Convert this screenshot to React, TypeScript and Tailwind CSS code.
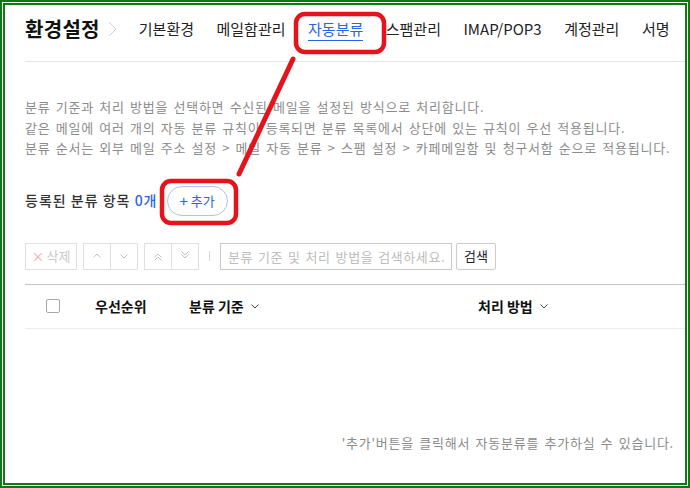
import React from 'react';

const tabs = ['기본환경', '메일함관리', '자동분류', '스팸관리', 'IMAP/POP3', '계정관리', '서명'];

function Chevron({ dir = 'down', double = false }: { dir?: 'up' | 'down'; double?: boolean }) {
  const up = dir === 'up';
  return (
    <svg width="10" height="10" viewBox="0 0 10 10" fill="none" stroke="#c4c4c4" strokeWidth="1">
      {up ? <polyline points="1.5,6.5 5,3 8.5,6.5" /> : <polyline points="1.5,3.5 5,7 8.5,3.5" />}
      {double && (up ? <polyline points="1.5,9.5 5,6 8.5,9.5" /> : <polyline points="1.5,0.5 5,4 8.5,0.5" />)}
    </svg>
  );
}

function SortCaret() {
  return (
    <svg width="10" height="10" viewBox="0 0 10 10" fill="none" stroke="#444" strokeWidth="1" className="ml-[6px]">
      <polyline points="1.5,3.5 5,7 8.5,3.5" />
    </svg>
  );
}

export default function App() {
  return (
    <div
      className="relative w-[690px] h-[488px] overflow-hidden bg-white border-2 border-[#0f7a14] p-px text-[#333]"
      style={{ fontFamily: '"Noto Sans CJK KR", "Noto Sans", sans-serif' }}
    >
      <div className="w-full h-full border-2 border-[#0f7a14] overflow-hidden pl-[20px]">
        {/* Header */}
        <div className="flex items-center h-[57px] pb-[9px] border-b border-[#e6e6e6] whitespace-nowrap">
          <h1 className="text-[20px] font-bold tracking-[0.3px] text-[#111] leading-[24px]">환경설정</h1>
          <svg width="9" height="16" viewBox="0 0 9 16" fill="none" stroke="#d0d0d0" strokeWidth="1" className="ml-[8px]">
            <polyline points="1,1 8,8 1,15" />
          </svg>
          <nav className="flex gap-[22.5px] ml-[22px]">
            {tabs.map(t => (
              <span
                key={t}
                className={`relative text-[15px] leading-[20px] ${t === '자동분류' ? 'text-[#2764e6]' : 'text-[#222]'}`}
              >
                {t}
                {t === '자동분류' && <span className="absolute left-0 right-0 top-[21px] h-px bg-[#2764e6]" />}
              </span>
            ))}
          </nav>
        </div>

        {/* Description */}
        <div className="mt-[35px] text-[13px] tracking-[0.77px] [word-spacing:1.6px] leading-[20.5px] text-[#8c8c8c] whitespace-nowrap">
          <p>분류 기준과 처리 방법을 선택하면 수신된 메일을 설정된 방식으로 처리합니다.</p>
          <p>같은 메일에 여러 개의 자동 분류 규칙이 등록되면 분류 목록에서 상단에 있는 규칙이 우선 적용됩니다.</p>
          <p>분류 순서는 외부 메일 주소 설정 &gt; 메일 자동 분류 &gt; 스팸 설정 &gt; 카페메일함 및 청구서함 순으로 적용됩니다.</p>
        </div>

        {/* Count + add */}
        <div className="mt-[27px] flex items-center h-[30px]">
          <span className="text-[14px] font-medium tracking-[1px] text-[#333]">
            등록된 분류 항목 <span className="text-[#2764e6]">0개</span>
          </span>
          <button className="ml-[9px] h-[30px] w-[61px] rounded-full border border-[#a9c3f2] text-[13px] text-[#2764e6] flex items-center justify-center">
            <span className="mr-[3px] text-[15px] leading-none">+</span>추가
          </button>
        </div>

        {/* Toolbar */}
        <div className="mt-[27px] flex items-center h-[27px] text-[13px]">
          <button className="h-full w-[52px] border border-[#e0e0e0] flex items-center justify-center text-[#c9c9c9]">
            <span className="text-[#f2a5a5] mr-[2px]">×</span>삭제
          </button>
          <div className="ml-[6px] h-full w-[55px] border border-[#e0e0e0] flex">
            <span className="flex-1 flex items-center justify-center border-r border-[#e0e0e0]"><Chevron dir="up" /></span>
            <span className="flex-1 flex items-center justify-center"><Chevron dir="down" /></span>
          </div>
          <div className="ml-[6px] h-full w-[55px] border border-[#e0e0e0] flex">
            <span className="flex-1 flex items-center justify-center border-r border-[#e0e0e0]"><Chevron dir="up" double /></span>
            <span className="flex-1 flex items-center justify-center"><Chevron dir="down" double /></span>
          </div>
          <span className="ml-[10px] w-px h-[10px] bg-[#d6d6d6]" />
          <input
            className="ml-[10px] h-full w-[232px] border border-[#c9c9c9] pl-[7px] pr-[2px] text-[13px] tracking-[0.6px] [word-spacing:1.4px] outline-none placeholder:text-[#bdbdbd]"
            placeholder="분류 기준 및 처리 방법을 검색하세요."
          />
          <button className="ml-[4px] h-full w-[40px] border border-[#cccccc] rounded-[2px] text-[#222]">검색</button>
        </div>

        {/* Table header */}
        <div className="mt-[14px] flex items-center h-[45px] border-t border-[#c4c4c4] border-b border-b-[#ececec] text-[14px] font-semibold text-[#111] whitespace-nowrap">
          <div className="w-[70px] pl-[21px] flex items-center">
            <span className="w-[14px] h-[14px] border border-[#a8a8a8] rounded-[2px] bg-white" />
          </div>
          <div className="w-[94px]">우선순위</div>
          <div className="w-[289px] flex items-center">분류 기준<SortCaret /></div>
          <div className="flex items-center">처리 방법<SortCaret /></div>
        </div>

        {/* Empty */}
        <p className="mt-[104px] pr-[11px] text-right text-[13px] tracking-[0.77px] [word-spacing:1.6px] leading-[20px] text-[#8c8c8c] whitespace-nowrap">
          '추가'버튼을 클릭해서 자동분류를 추가하실 수 있습니다.
        </p>
      </div>

      {/* Annotation overlay */}
      <svg className="absolute left-0 top-0 pointer-events-none" width="690" height="488" viewBox="0 0 690 488" fill="none">
        <rect x="294" y="12" width="88" height="38" rx="9" stroke="#e5131b" strokeWidth="4.5" />
        <rect x="160" y="179" width="74" height="42" rx="9" stroke="#e5131b" strokeWidth="4.5" />
        <line x1="291" y1="57" x2="237" y2="172" stroke="#e5131b" strokeWidth="5" strokeLinecap="round" />
      </svg>
    </div>
  );
}
